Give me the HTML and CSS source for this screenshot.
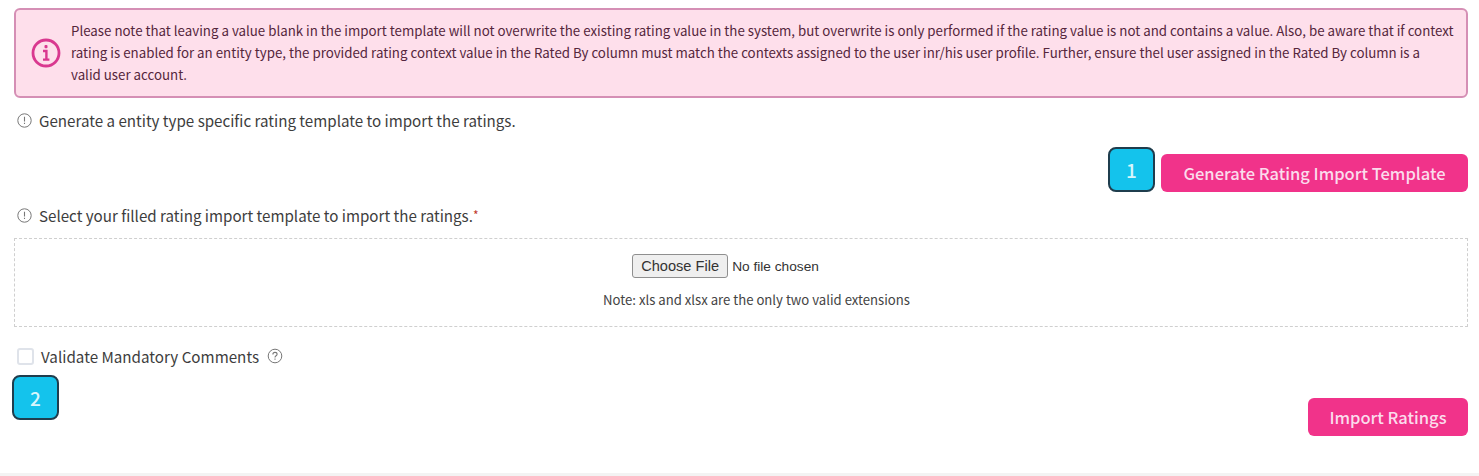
FILE: index.html
```html
<!DOCTYPE html>
<html>
<head>
    <link rel="stylesheet" href="styles.css">
</head>

<body>
    <div class="page">
        <div class="alert">
            <svg class="alert-icon" viewBox="0 0 30 30" width="30" height="30">
                <circle cx="15" cy="15" r="13" fill="none" stroke="#d9388f" stroke-width="2.8"/>
                <rect x="13.5" y="7" width="3" height="3.2" rx="1" fill="#d9388f"/>
                <path d="M12 13h3.4v8M12 21.6h6.4" fill="none" stroke="#d9388f" stroke-width="2.4"/>
            </svg>
            <p>Please note that leaving a value blank in the import template will not overwrite the existing rating value in the system, but overwrite is only performed if the rating value is not and contains a value. Also, be aware that if context rating is enabled for an entity type, the provided rating context value in the Rated By column must match the contexts assigned to the user inr/his user profile. Further, ensure thel user assigned in the Rated By column is a<br>valid user account.</p>
        </div>

        <div class="hint hint-first">
            <svg class="hint-icon" viewBox="0 0 15 15" width="15" height="15">
                <circle cx="7.5" cy="7.5" r="6.7" fill="none" stroke="#777" stroke-width="1"/>
                <path d="M7.5 3.800v4.700M7.500 9.800v1.300" fill="none" stroke="#777" stroke-width="1.100"/>
            </svg>
            <span>Generate a entity type specific rating template to import the ratings.</span>
        </div>

        <div class="action-row">
            <div class="badge">1</div>
            <button type="button" class="primary btn-generate">Generate Rating Import Template</button>
        </div>

        <div class="hint hint-second">
            <svg class="hint-icon" viewBox="0 0 15 15" width="15" height="15">
                <circle cx="7.5" cy="7.5" r="6.7" fill="none" stroke="#777" stroke-width="1"/>
                <path d="M7.5 3.800v4.700M7.500 9.800v1.300" fill="none" stroke="#777" stroke-width="1.100"/>
            </svg>
            <span>Select your filled rating import template to import the ratings.<span class="required">*</span></span>
        </div>

        <div class="dropzone">
            <div class="file-row">
                <span class="file-btn">Choose File</span>
                <span class="file-name">No file chosen</span>
            </div>
            <div class="file-note">Note: xls and xlsx are the only two valid extensions</div>
        </div>

        <div class="check-row">
            <span class="checkbox"></span>
            <span>Validate Mandatory Comments</span>
            <svg class="help-icon" viewBox="0 0 16 16" width="16" height="16">
                <circle cx="8" cy="8" r="6.8" fill="none" stroke="#777" stroke-width="1"/>
                <path d="M5.900 6.400c0-1.300 1-2 2.100-2s2.100.7 2.100 1.900c0 1.500-2.100 1.500-2.100 3.100M8 10.600v1.200" fill="none" stroke="#777" stroke-width="1.100"/>
            </svg>
        </div>

        <div class="bottom-row">
            <div class="badge">2</div>
            <button type="button" class="primary btn-import">Import Ratings</button>
        </div>
    </div>
    <div class="footer-strip"></div>
</body>
</html>
```

FILE: styles.css
```css
html, body {
    margin: 0;
    padding: 0;
}

body {
    height: 476px;
    overflow: hidden;
    background-color: #fff;
    font-family: "Noto Sans CJK JP", "Noto Sans", sans-serif;
    color: #3d3d3d;
    display: flex;
    flex-direction: column;
}

.page {
    flex: 1;
    padding: 8px 11px 0 14px;
}

.alert {
    height: 90px;
    box-sizing: border-box;
    display: flex;
    align-items: center;
    background-color: #fedfeb;
    border: 2px solid #d58fb5;
    border-radius: 6px;
    padding: 0 8px 0 15px;
}

.alert-icon {
    flex: none;
    margin-right: 10px;
}

.alert p {
    margin: 0;
    font-size: 13.31px;
    line-height: 22px;
    color: #55263c;
}

.hint {
    display: flex;
    align-items: center;
    font-size: 15.15px;
    line-height: 22px;
    margin-left: 3px;
}

.hint-icon {
    margin-right: 7px;
}

.hint-first {
    margin-top: 11px;
}

.hint-second {
    margin-top: 12px;
}

.required {
    color: #c0392b;
    font-size: 12px;
    vertical-align: top;
}

.action-row {
    display: flex;
    justify-content: flex-end;
    align-items: flex-end;
    margin-top: 16px;
}

.badge {
    box-sizing: border-box;
    width: 47px;
    height: 45px;
    background-color: #14c3ec;
    border: 2px solid #1f3d4d;
    border-radius: 8px;
    color: #d8f6fc;
    font-size: 19px;
    font-weight: 500;
    display: flex;
    align-items: center;
    justify-content: center;
}

.action-row .badge {
    margin-right: 6px;
}

.primary {
    border: none;
    border-radius: 6px;
    background-color: #f1338a;
    color: #fbdcec;
    font-family: inherit;
    font-size: 16.5px;
    font-weight: 500;
    padding: 0;
}

.btn-generate {
    width: 307px;
    height: 38px;
}

.btn-import {
    width: 160px;
    height: 38px;
    margin-top: 23px;
}

.dropzone {
    height: 89px;
    box-sizing: border-box;
    margin-top: 12px;
    border: 1px dashed #cfcfcf;
    display: flex;
    flex-direction: column;
    align-items: center;
    padding-top: 15px;
}

.file-row {
    display: flex;
    align-items: center;
    margin-right: 31px;
    font-family: "Liberation Sans", sans-serif;
    color: #333;
}

.file-btn {
    box-sizing: border-box;
    width: 96px;
    height: 24px;
    line-height: 22px;
    text-align: center;
    font-size: 14.6px;
    background-color: #efefef;
    border: 1px solid #8f8f8f;
    border-radius: 3px;
    margin-right: 4px;
}

.file-name {
    font-size: 13.7px;
}

.file-note {
    margin: 12px 0 0 31px;
    font-size: 13.15px;
    line-height: 20px;
    color: #444;
}

.check-row {
    display: flex;
    align-items: center;
    margin: 17px 0 0 3px;
    font-size: 15.2px;
    line-height: 24px;
}

.checkbox {
    box-sizing: border-box;
    width: 17px;
    height: 17px;
    border: 2px solid #dfe3ea;
    border-radius: 3px;
    margin-right: 7px;
}

.help-icon {
    margin-left: 8px;
}

.bottom-row {
    display: flex;
    justify-content: space-between;
    align-items: flex-start;
    margin: 7px 0 0 -2px;
}

.footer-strip {
    height: 3px;
    background-color: #f3f3f3;
}
```
